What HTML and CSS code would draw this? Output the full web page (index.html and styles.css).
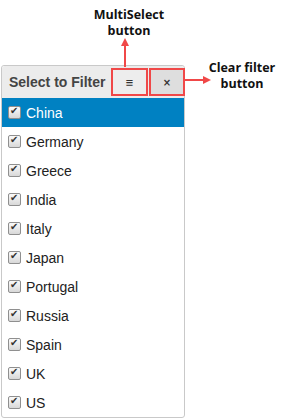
FILE: index.html
```html
<!DOCTYPE html>
<html lang="en">
<head>
  <meta charset="UTF-8">
  <title>Select to Filter</title>
  <link rel="stylesheet" href="styles.css">
</head>
<body>

  <div class="tela">
    <!-- anotacoes -->
    <div class="nota nota-multi">MultiSelect<br>button</div>
    <div class="nota nota-limpar">Clear filter<br>button</div>
    <svg class="setas" width="282" height="419" viewBox="0 0 282 419">
      <line x1="125" y1="67" x2="125" y2="44" stroke="#f04848" stroke-width="2"/>
      <polygon points="125,38 121,46 129,46" fill="#f04848"/>
      <line x1="184" y1="80" x2="205" y2="80" stroke="#f04848" stroke-width="2"/>
      <polygon points="211,80 203,76 203,84" fill="#f04848"/>
    </svg>

    <div class="painel">
      <div class="cabecalho">
        <span class="titulo">Select to Filter</span>
        <button class="btn btn-multi">&#8801;</button>
        <button class="btn btn-limpar">&#215;</button>
      </div>

      <div class="item ativo"><span class="caixa-check"></span>China</div>
      <div class="item"><span class="caixa-check"></span>Germany</div>
      <div class="item"><span class="caixa-check"></span>Greece</div>
      <div class="item"><span class="caixa-check"></span>India</div>
      <div class="item"><span class="caixa-check"></span>Italy</div>
      <div class="item"><span class="caixa-check"></span>Japan</div>
      <div class="item"><span class="caixa-check"></span>Portugal</div>
      <div class="item"><span class="caixa-check"></span>Russia</div>
      <div class="item"><span class="caixa-check"></span>Spain</div>
      <div class="item"><span class="caixa-check"></span>UK</div>
      <div class="item"><span class="caixa-check"></span>US</div>
    </div>
  </div>

</body>
</html>
```

FILE: styles.css
```css
body {
  margin: 0;
  background: #fff;
  font-family: "Liberation Sans", Arial, sans-serif;
}
.tela {
  position: relative;
  width: 282px;
  height: 419px;
  overflow: hidden;
}
.nota {
  position: absolute;
  font-family: "Open Sans", sans-serif;
  font-weight: bold;
  font-size: 12.5px;
  line-height: 16px;
  color: #111;
  text-align: center;
}
.nota-multi {
  left: 88px;
  top: 7px;
  width: 82px;
}
.nota-limpar {
  left: 206px;
  top: 60px;
  width: 72px;
}
.setas {
  position: absolute;
  left: 0;
  top: 0;
}
.painel {
  width: 182px;
  margin: 65px 0 0 1px;
  border: 1px solid #c9c9c9;
  border-radius: 3px;
}
.cabecalho {
  display: flex;
  align-items: center;
  height: 32px;
  background: #ececec;
  border-radius: 3px 3px 0 0;
}
.titulo {
  flex: 1;
  padding-left: 7px;
  font-weight: bold;
  font-size: 14px;
  color: #444;
}
.btn {
  height: 28px;
  padding: 0;
  border: 2px solid #f04848;
  font-family: "DejaVu Sans", sans-serif;
  font-size: 10px;
  font-weight: bold;
  color: #333;
  cursor: pointer;
}
.btn-multi {
  width: 37px;
  margin-right: 1px;
  background: #ededed;
}
.btn-limpar {
  width: 36px;
  margin-right: -1px;
  background: #dedede;
}
.item {
  display: flex;
  align-items: center;
  height: 29px;
  padding-left: 6px;
  font-size: 14px;
  color: #222;
}
.item.ativo {
  background: #0081c2;
  color: #fff;
}
.caixa-check {
  position: relative;
  width: 11px;
  height: 11px;
  margin-right: 5px;
  border: 1px solid #8f8f8f;
  border-radius: 2px;
  background: linear-gradient(#fafafa, #d8d8d8);
}
.caixa-check::after {
  content: "\2714";
  position: absolute;
  left: 1px;
  top: -2px;
  font-family: "DejaVu Sans", sans-serif;
  font-size: 10px;
  color: #333;
}
```
